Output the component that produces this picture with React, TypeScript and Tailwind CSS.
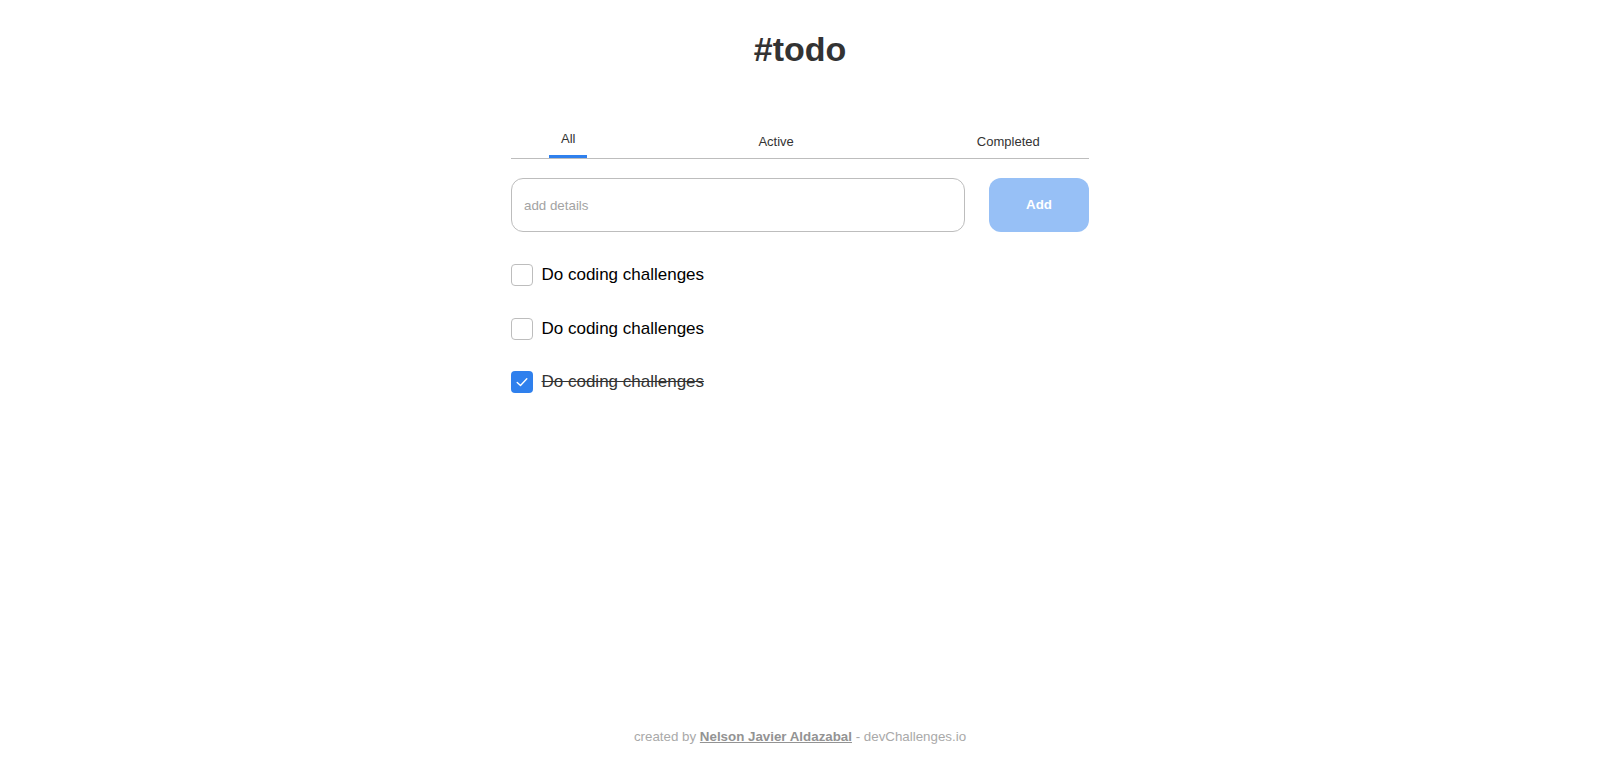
import React, { useState } from "react";

type Todo = { id: number; text: string; done: boolean };

export default function App() {
  const [tab, setTab] = useState<"all" | "active" | "completed">("all");
  const [todos, setTodos] = useState<Todo[]>([
    { id: 1, text: "Do coding challenges", done: false },
    { id: 2, text: "Do coding challenges", done: false },
    { id: 3, text: "Do coding challenges", done: true },
  ]);

  const toggle = (id: number) =>
    setTodos((t) => t.map((x) => (x.id === id ? { ...x, done: !x.done } : x)));

  return (
    <div className="min-h-[764px] flex flex-col items-center bg-white font-['Liberation_Sans',Arial,sans-serif] text-[#333333]">
      <h1 className="mt-[29px] text-[34px] font-bold leading-[40px] text-[#333333]">#todo</h1>

      <div className="w-[578px] mt-[62px]">
        <nav className="flex items-end pl-[38px] gap-[159px] border-b border-[#bdbdbd]">
          <button
            onClick={() => setTab("all")}
            className={
              tab === "all"
                ? "px-[12px] pb-[9px] border-b-[3px] border-[#2f80ed] rounded-t-[2px] text-[13px] leading-[15px] text-[#333333]"
                : "px-[12px] pb-[9px] text-[13px] leading-[15px] text-[#333333]"
            }
          >
            All
          </button>
          <button
            onClick={() => setTab("active")}
            className={
              tab === "active"
                ? "px-[12px] pb-[9px] border-b-[3px] border-[#2f80ed] text-[13px] leading-[15px] text-[#333333]"
                : "px-[12px] pb-[9px] text-[13px] leading-[15px] text-[#333333]"
            }
          >
            Active
          </button>
          <button
            onClick={() => setTab("completed")}
            className={
              tab === "completed"
                ? "px-[12px] pb-[9px] border-b-[3px] border-[#2f80ed] text-[13px] leading-[15px] text-[#333333]"
                : "px-[12px] pb-[9px] text-[13px] leading-[15px] text-[#333333]"
            }
          >
            Completed
          </button>
        </nav>

        <div className="flex gap-[24px] mt-[19px]">
          <input
            placeholder="add details"
            className="flex-1 h-[54px] rounded-[12px] border border-[#bdbdbd] px-[12px] text-[13.33px] outline-none placeholder:text-[#a3a3a3] font-['Liberation_Sans',Arial,sans-serif]"
          />
          <button className="w-[100px] h-[54px] rounded-[12px] bg-[#97c0f6] text-white font-bold text-[13.33px]">
            Add
          </button>
        </div>

        <ul className="mt-[32px] flex flex-col gap-[31.5px]">
          {todos.map((t) => (
            <li key={t.id} className="flex items-center h-[22px] gap-[8.5px]">
              <button
                onClick={() => toggle(t.id)}
                className={
                  t.done
                    ? "w-[22px] h-[22px] rounded-[4px] bg-[#2f80ed] flex items-center justify-center"
                    : "w-[22px] h-[22px] rounded-[4px] border border-[#bdbdbd] bg-white"
                }
              >
                {t.done && (
                  <svg width="14" height="14" viewBox="0 0 14 14" fill="none">
                    <path d="M2.2 7.4 L5.5 10.4 L11.8 3.8" stroke="white" strokeWidth="1.4" strokeLinecap="round" strokeLinejoin="round" />
                  </svg>
                )}
              </button>
              <span
                className={
                  t.done
                    ? "text-[17px] leading-[20px] text-[#333333] line-through"
                    : "text-[17px] leading-[20px] text-black"
                }
              >
                {t.text}
              </span>
            </li>
          ))}
        </ul>
      </div>

      <footer className="mt-auto pb-[20px] text-[13.33px] leading-[15px] text-[#a9a9a9]">
        created by{" "}
        <a className="font-bold underline text-[#939393]">Nelson Javier Aldazabal</a> - devChallenges.io
      </footer>
    </div>
  );
}
